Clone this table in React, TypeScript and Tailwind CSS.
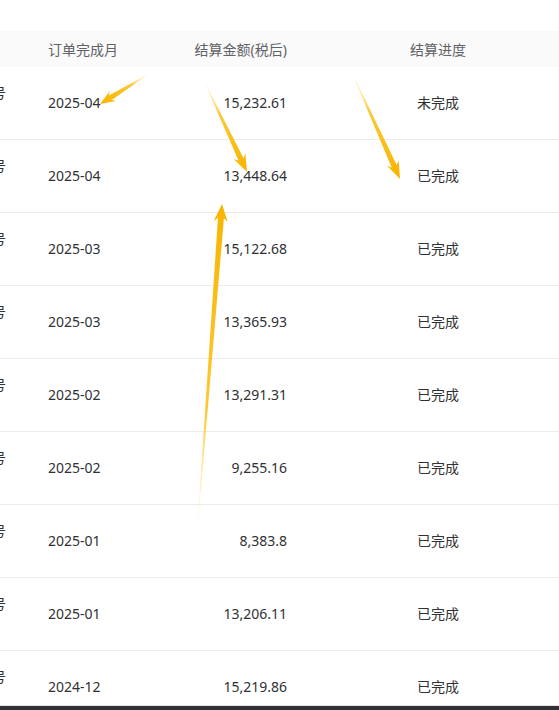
import React from "react";

type Row = { month: string; amount: string; status: string };

const ROWS: Row[] = [
  { month: "2025-04", amount: "15,232.61", status: "未完成" },
  { month: "2025-04", amount: "13,448.64", status: "已完成" },
  { month: "2025-03", amount: "15,122.68", status: "已完成" },
  { month: "2025-03", amount: "13,365.93", status: "已完成" },
  { month: "2025-02", amount: "13,291.31", status: "已完成" },
  { month: "2025-02", amount: "9,255.16", status: "已完成" },
  { month: "2025-01", amount: "8,383.8", status: "已完成" },
  { month: "2025-01", amount: "13,206.11", status: "已完成" },
  { month: "2024-12", amount: "15,219.86", status: "已完成" },
];

// annotation arrows drawn over the table: tail -> tip
const ARROWS = [
  { id: "a1", x1: 147, y1: 75, x2: 100, y2: 104, head: 14, headW: 12, shaft: 5.5 },
  { id: "a2", x1: 205, y1: 83, x2: 247, y2: 172, head: 16, headW: 13, shaft: 5.5 },
  { id: "a3", x1: 353, y1: 75, x2: 400, y2: 179, head: 16, headW: 13, shaft: 5.5 },
  { id: "a4", x1: 198, y1: 521, x2: 222, y2: 204, head: 16, headW: 14, shaft: 6 },
];

function arrowPoints(a: (typeof ARROWS)[number]) {
  const dx = a.x2 - a.x1;
  const dy = a.y2 - a.y1;
  const len = Math.hypot(dx, dy);
  const ux = dx / len;
  const uy = dy / len;
  const nx = -uy;
  const ny = ux;
  const bx = a.x2 - ux * a.head;
  const by = a.y2 - uy * a.head;
  const sx = bx + ux * 2;
  const sy = by + uy * 2;
  const pts: [number, number][] = [
    [a.x1 + nx * 0.3, a.y1 + ny * 0.3],
    [sx + (nx * a.shaft) / 2, sy + (ny * a.shaft) / 2],
    [bx - ux * 1.5 + (nx * a.headW) / 2, by - uy * 1.5 + (ny * a.headW) / 2],
    [a.x2, a.y2],
    [bx - ux * 1.5 - (nx * a.headW) / 2, by - uy * 1.5 - (ny * a.headW) / 2],
    [sx - (nx * a.shaft) / 2, sy - (ny * a.shaft) / 2],
    [a.x1 - nx * 0.3, a.y1 - ny * 0.3],
  ];
  return pts.map((p) => p.map((v) => v.toFixed(1)).join(",")).join(" ");
}

function Arrows() {
  return (
    <svg className="absolute inset-0 pointer-events-none" width={559} height={710} viewBox="0 0 559 710">
      <defs>
        {ARROWS.map((a) => (
          <linearGradient key={a.id} id={`g-${a.id}`} gradientUnits="userSpaceOnUse" x1={a.x1} y1={a.y1} x2={a.x2} y2={a.y2}>
            <stop offset="0" stopColor="#ffe27a" stopOpacity="0.15" />
            <stop offset="0.35" stopColor="#fcc21b" stopOpacity="0.9" />
            <stop offset="1" stopColor="#f8b400" />
          </linearGradient>
        ))}
      </defs>
      {ARROWS.map((a) => (
        <polygon key={a.id} points={arrowPoints(a)} fill={`url(#g-${a.id})`} />
      ))}
    </svg>
  );
}

export default function App() {
  return (
    <div
      className="relative w-[559px] h-[710px] overflow-hidden bg-white flex flex-col text-[14px]"
      style={{ fontFamily: '"Noto Sans", "Noto Sans CJK SC", sans-serif' }}
    >
      <div className="h-[706px] overflow-hidden pt-[31px] border-b border-[#e4e4e4]">
        {/* header */}
        <div className="flex items-center h-[36px] bg-[#fafafa] text-[#5f6266]">
          <div className="w-[48px] shrink-0" />
          <div className="w-[130px] shrink-0">订单完成月</div>
          <div className="w-[139px] shrink-0 pr-[30px] text-right">结算金额(税后)</div>
          <div className="flex-1 text-center">结算进度</div>
        </div>

        {/* rows */}
        {ROWS.map((r, i) => (
          <div key={i} className="flex items-center h-[73px] pb-[1px] border-b border-[#ebebeb] text-[#303133]">
            <div className="w-[48px] shrink-0 overflow-hidden flex justify-end pr-[42px]">
              <div className="flex flex-col leading-[18px] -mt-[1px] whitespace-nowrap items-end">
                <span>单号</span>
                <span>&nbsp;</span>
              </div>
            </div>
            <div className="w-[130px] shrink-0">{r.month}</div>
            <div className="w-[139px] shrink-0 pr-[30px] text-right">{r.amount}</div>
            <div className="flex-1 text-center">{r.status}</div>
          </div>
        ))}
      </div>
      <div className="h-[4px] bg-[#2f3237]" />
      <Arrows />
    </div>
  );
}
